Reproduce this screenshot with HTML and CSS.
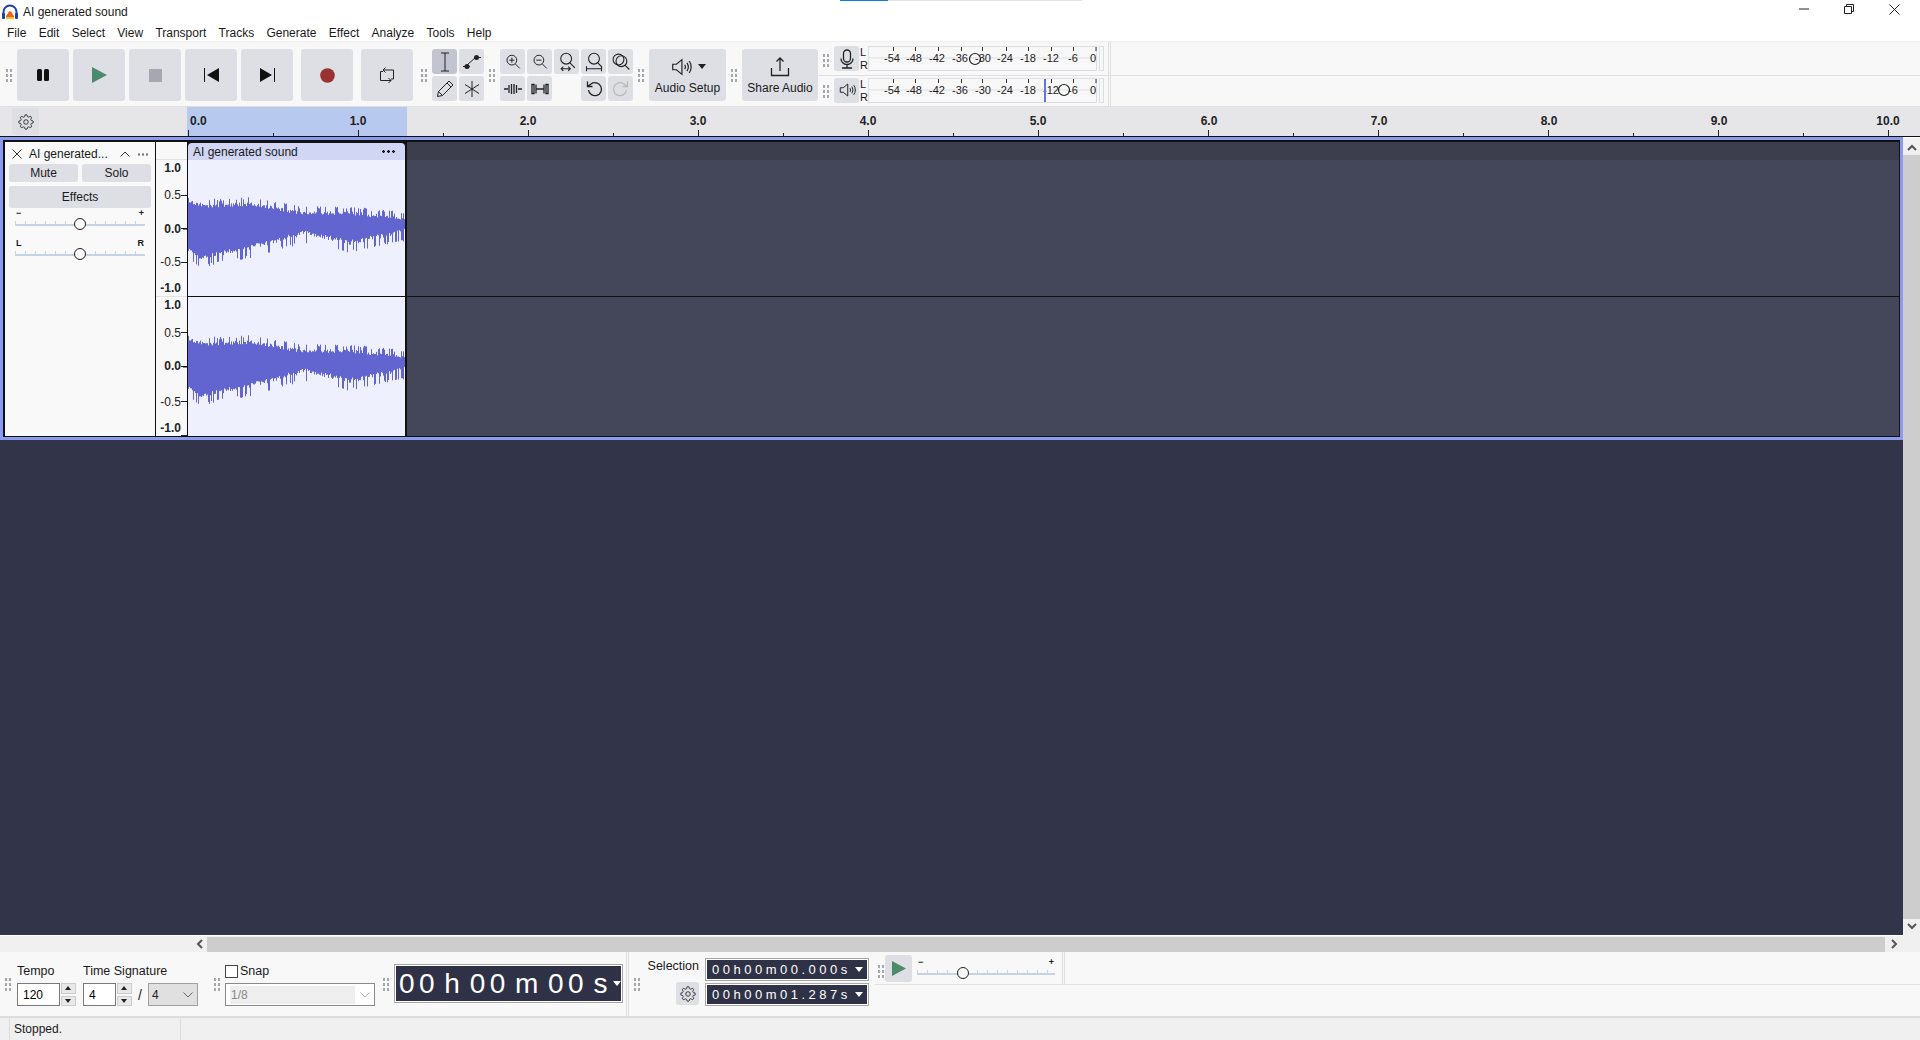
FILE: index.html
```html
<!DOCTYPE html>
<html lang="en">
<head>
  <meta charset="UTF-8"/>
  <title>AI generated sound</title>
  <link rel="stylesheet" href="styles.css">
</head>
<body>

<svg class="defs" width="0" height="0">
  <symbol id="gear" viewBox="0 0 24 24"><circle cx="12" cy="12" r="3.4"/><path d="M19.4 15a1.65 1.65 0 0 0 .33 1.82l.06.06a2 2 0 0 1 0 2.83 2 2 0 0 1-2.83 0l-.06-.06a1.65 1.65 0 0 0-1.82-.33 1.65 1.65 0 0 0-1 1.51V21a2 2 0 0 1-2 2 2 2 0 0 1-2-2v-.09A1.65 1.65 0 0 0 9 19.4a1.65 1.65 0 0 0-1.82.33l-.06.06a2 2 0 0 1-2.83 0 2 2 0 0 1 0-2.83l.06-.06a1.65 1.65 0 0 0 .33-1.82 1.65 1.65 0 0 0-1.51-1H3a2 2 0 0 1-2-2 2 2 0 0 1 2-2h.09A1.65 1.65 0 0 0 4.6 9a1.65 1.65 0 0 0-.33-1.82l-.06-.06a2 2 0 0 1 0-2.83 2 2 0 0 1 2.83 0l.06.06a1.65 1.65 0 0 0 1.82.33H9a1.65 1.65 0 0 0 1-1.51V3a2 2 0 0 1 2-2 2 2 0 0 1 2 2v.09a1.65 1.65 0 0 0 1 1.51 1.65 1.65 0 0 0 1.82-.33l.06-.06a2 2 0 0 1 2.83 0 2 2 0 0 1 0 2.83l-.06.06a1.65 1.65 0 0 0-.33 1.82V9a1.65 1.65 0 0 0 1.51 1H21a2 2 0 0 1 2 2 2 2 0 0 1-2 2h-.09a1.65 1.65 0 0 0-1.51 1z"/></symbol>
  <symbol id="speaker" viewBox="0 0 24 24"><path d="M3 9v6h4l6 5V4L7 9zM16 9.5q1.6 2.5 0 5M18.5 7.5q3 4.5 0 9M21 5.500q4.200 6.500 0 13"/></symbol>
  <symbol id="mag" viewBox="0 0 24 24"><circle cx="10.500" cy="9.500" r="6.500"/><path d="M15 14.500l6 6"/></symbol>
</svg>

<!-- title bar -->
<header class="titlebar">
  <svg class="logo" width="16" height="16" viewBox="0 0 16 16">
    <path d="M1.500 11V8a6.500 6.500 0 0 1 13 0v3" fill="none" stroke="#1c3fa8" stroke-width="2"/>
    <rect x="0" y="9" width="3" height="6" rx="1" fill="#1c3fa8"/>
    <rect x="13" y="9" width="3" height="6" rx="1" fill="#1c3fa8"/>
    <path d="M4 14v-2l1.500-2 1 -2 1.500-1 1.500 1 1 2 1.500 2v2z" fill="#e8651c"/>
    <path d="M4 15v-2h8v2z" fill="#f2c21a"/>
  </svg>
  <span class="title">AI generated sound</span>
  <div class="loadbar"><i></i></div>
  <div class="winbtns">
    <svg width="10" height="10" viewBox="0 0 10 10"><path d="M0 5h10" stroke="#222"/></svg>
    <svg width="10" height="10" viewBox="0 0 10 10"><path d="M.5 2.500h7v7h-7zM2.500 2.500v-2h7v7h-2" fill="none" stroke="#222"/></svg>
    <svg width="11" height="11" viewBox="0 0 11 11"><path d="M.5 .5l10 10M10.500 .5l-10 10" stroke="#222"/></svg>
  </div>
</header>

<nav class="menubar">
  <span>File</span><span>Edit</span><span>Select</span><span>View</span><span>Transport</span><span>Tracks</span><span>Generate</span><span>Effect</span><span>Analyze</span><span>Tools</span><span>Help</span>
</nav>

<!-- top toolbars -->
<section class="toolbar">
  <div class="grip"></div>
  <div class="transport">
    <button class="tbtn"><svg width="14" height="14" viewBox="0 0 14 14"><rect x="1" y="1" width="5" height="12" rx="1.500" fill="#111"/><rect x="8" y="1" width="5" height="12" rx="1.500" fill="#111"/></svg></button>
    <button class="tbtn"><svg width="16" height="16" viewBox="0 0 16 16"><path d="M1 0l15 8-15 8z" fill="#4c8a6c"/></svg></button>
    <button class="tbtn"><svg width="13" height="13" viewBox="0 0 13 13"><rect width="13" height="13" fill="#a6a8b1"/></svg></button>
    <button class="tbtn"><svg width="15" height="14" viewBox="0 0 15 14"><path d="M.5 0v14" stroke="#111"/><path d="M15 0v14L3 7z" fill="#111"/></svg></button>
    <button class="tbtn"><svg width="15" height="14" viewBox="0 0 15 14"><path d="M14.500 0v14" stroke="#111"/><path d="M0 0v14l12-7z" fill="#111"/></svg></button>
    <button class="tbtn gap"><svg width="15" height="15" viewBox="0 0 15 15"><circle cx="7.500" cy="7.500" r="7.300" fill="#9a3232"/></svg></button>
    <button class="tbtn gap"><svg width="16" height="18" viewBox="0 0 16 18" fill="none" stroke="#222"><path d="M4 4h10.500v9H12M12 14.500H1.500V5.500H4M6.500 1.500L4 4l2.500 2.500M9.500 12l2.500 2.500L9.500 17"/></svg></button>
  </div>
  <div class="grip wide"></div>
  <div class="tools">
    <button class="sbtn on"><svg width="16" height="20" viewBox="0 0 16 20" fill="none" stroke="#222"><path d="M4 1h8M4 19h8M8 1v18"/></svg></button>
    <button class="sbtn"><svg width="20" height="18" viewBox="0 0 20 18"><path d="M4 13L14 4" stroke="#222"/><path d="M1 13.500h7M12 4.500h7" stroke="#222"/><circle cx="5" cy="13.500" r="2.500" fill="#222"/><circle cx="14.500" cy="4.500" r="2.500" fill="#222"/></svg></button>
    <button class="sbtn"><svg width="18" height="18" viewBox="0 0 18 18" fill="none" stroke="#222"><path d="M1.500 16.500l1-5L13 1l4 4L6.500 15.500zM2.500 11.500l4 4M11 3l4 4"/></svg></button>
    <button class="sbtn"><svg width="16" height="16" viewBox="0 0 16 16" fill="none" stroke="#222"><path d="M8 0v16M1 3.500l14 9M15 3.500l-14 9"/></svg></button>
  </div>
  <div class="grip"></div>
  <div class="edit">
    <button class="sbtn"><svg class="ln" width="18" height="18" viewBox="0 0 24 24"><use href="#mag"/><path d="M7 9.500h7M10.500 6v7"/></svg></button>
    <button class="sbtn"><svg class="ln" width="18" height="18" viewBox="0 0 24 24"><use href="#mag"/><path d="M7 9.500h7"/></svg></button>
    <button class="sbtn"><svg class="ln" width="20" height="20" viewBox="0 0 24 24"><circle cx="11" cy="8" r="6.500"/><path d="M15.500 13l6 6M5 20h11M7.500 17.500L5 20l2.500 2.500M13.500 17.500L16 20l-2.500 2.500"/></svg></button>
    <button class="sbtn"><svg class="ln" width="20" height="20" viewBox="0 0 24 24"><circle cx="12" cy="8" r="6.500"/><path d="M16.500 13l5 5M3 20h18M3 17v6M21 17v6"/></svg></button>
    <button class="sbtn"><svg class="ln" width="20" height="20" viewBox="0 0 24 24"><circle cx="9" cy="9" r="6.500"/><circle cx="12.500" cy="11" r="6.500"/><path d="M17 16l5 5"/></svg></button>
    <button class="sbtn"><svg class="ln" width="18" height="12" viewBox="0 0 18 12"><path d="M0 6h4M14 6h4M5 2v8M7.500 1v10M10 1v10M12.500 2v8"/></svg></button>
    <button class="sbtn"><svg class="ln" width="18" height="12" viewBox="0 0 18 12"><path d="M1 1.500v9h2v-9zM5 1.500v9M13 1.500v9M15 1.500v9h2v-9zM5 6h8"/></svg></button>
    <span class="sgap"></span>
    <button class="sbtn"><svg class="ln" width="18" height="18" viewBox="0 0 18 18"><path d="M3.500 10a6.500 6.500 0 1 0 2.500-6L2.500 6.500M2.500 1.500v5h5"/></svg></button>
    <button class="sbtn off"><svg class="ln" width="18" height="18" viewBox="0 0 18 18"><path d="M14.500 10a6.500 6.500 0 1 1-2.500-6l3.500 2.500M15.500 1.500v5h-5"/></svg></button>
  </div>
  <div class="grip"></div>
  <button class="bigbtn setup">
    <span class="bigicon"><svg class="ln" width="22" height="22" viewBox="0 0 24 24"><use href="#speaker"/></svg><i class="caret"></i></span>
    <span>Audio Setup</span>
  </button>
  <div class="grip"></div>
  <button class="bigbtn share">
    <svg class="ln" width="20" height="22" viewBox="0 0 20 22"><path d="M1.500 12v7.500h17V12M10 15V2M6.500 5.500L10 2l3.500 3.500"/></svg>
    <span>Share Audio</span>
  </button>
  <div class="meters">
    <div class="meterrow first">
      <div class="grip"></div>
      <button class="sbtn"><svg class="ln" width="20" height="20" viewBox="0 0 20 20"><rect x="6.500" y="1" width="7" height="12" rx="3.500"/><path d="M4 9.500a6 6 0 0 0 12 0M10 15.500V19M5 19h10"/></svg></button>
      <div class="lr"><span>L</span><span>R</span></div>
      <svg class="meter" width="229" height="25" viewBox="0 0 229 25"><rect class="mbox" x=".5" y=".5" width="228" height="24"/><path class="mline" d="M1 12h227"/><path class="mtick" d="M25.500 1v4M47.500 1v4M70.500 1v4M93.500 1v4M114.500 1v4M138.500 1v4M160.500 1v4M183.500 1v4M205.500 1v4M228 1v4"/>
        <g class="mtext"><text x="24" y="16">-54</text><text x="46" y="16">-48</text><text x="69" y="16">-42</text><text x="92" y="16">-36</text><text x="115" y="16">-30</text><text x="137" y="16">-24</text><text x="160" y="16">-18</text><text x="183" y="16">-12</text><text x="205" y="16">-6</text><text x="225" y="16">0</text></g>
        <circle class="knob" cx="107" cy="13" r="5.500"/></svg>
      <div class="mend"></div>
      <div class="vlines"></div>
    </div>
    <div class="meterrow">
      <div class="grip"></div>
      <button class="sbtn"><svg class="ln" width="18" height="18" viewBox="0 0 24 24"><use href="#speaker"/></svg></button>
      <div class="lr"><span>L</span><span>R</span></div>
      <svg class="meter" width="229" height="25" viewBox="0 0 229 25"><rect class="mbox" x=".5" y=".5" width="228" height="24"/><path class="mline" d="M1 12h227"/><path class="mtick" d="M25.500 1v4M47.500 1v4M70.500 1v4M93.500 1v4M114.500 1v4M138.500 1v4M160.500 1v4M183.500 1v4M205.500 1v4M228 1v4"/>
        <g class="mtext"><text x="24" y="16">-54</text><text x="46" y="16">-48</text><text x="69" y="16">-42</text><text x="92" y="16">-36</text><text x="115" y="16">-30</text><text x="137" y="16">-24</text><text x="160" y="16">-18</text><text x="183" y="16">-12</text><text x="205" y="16">-6</text><text x="225" y="16">0</text></g>
        <rect x="176" y="1" width="2" height="23" fill="#6674e0"/>
        <circle class="knob" cx="196" cy="12" r="5.500"/></svg>
      <div class="mend"></div>
      <div class="vlines"></div>
    </div>
  </div>
</section>

<!-- time ruler -->
<section class="rulerbar">
  <div class="gearcell"><button class="gearbtn"><svg class="ln" width="16" height="16"><use href="#gear"/></svg></button></div>
  <svg class="ruler" width="1920" height="29" viewBox="0 0 1920 29">
    <rect x="187" y="0" width="220" height="29" fill="#b8c9f0"/>
    <path id="rulerTicks" stroke="#222" fill="none" d=""/>
    <g class="rtext">
      <text class="first" x="190" y="18">0.0</text><text x="358" y="18">1.0</text><text x="528" y="18">2.0</text><text x="698" y="18">3.0</text><text x="868" y="18">4.0</text><text x="1038" y="18">5.0</text><text x="1209" y="18">6.0</text><text x="1379" y="18">7.0</text><text x="1549" y="18">8.0</text><text x="1719" y="18">9.0</text><text x="1888" y="18">10.0</text>
    </g>
  </svg>
</section>

<!-- track area -->
<main class="workspace">
  <div class="trackview">
    <div class="trackframe">
      <div class="trackpanel">
        <div class="trackhead">
          <svg width="10" height="10" viewBox="0 0 10 10"><path d="M.5 .5l9 9M9.500 .5l-9 9" stroke="#333"/></svg>
          <span class="trackname">AI generated...</span>
          <svg class="fold" width="10" height="6" viewBox="0 0 10 6" fill="none"><path d="M.5 5.500L5 1l4.500 4.500" stroke="#333"/></svg>
          <span class="dots"></span>
        </div>
        <div class="btnrow"><button class="pbtn">Mute</button><button class="pbtn">Solo</button></div>
        <button class="pbtn effects">Effects</button>
        <div class="slider gain">
          <div class="sliderlabels"><b>−</b><b>+</b></div>
          <div class="track"><i></i></div>
        </div>
        <div class="slider pan">
          <div class="sliderlabels"><b>L</b><b>R</b></div>
          <div class="track"><i></i></div>
        </div>
      </div>
      <svg class="vruler" width="31" height="294" viewBox="0 0 31 294">
        <path d="M0 17.500h31" stroke="#e2e2e2"/><path d="M0 154.500h31" stroke="#e2e2e2"/>
        <path d="M25 53.500h6M25 86.500h6M25 120.500h6M25 190.500h6M25 224.500h6M25 259.500h6M25 293.500h6" stroke="#222"/>
        <path d="M27 86v1h4M27 224v1h4" stroke="#111"/>
        <g class="vtext">
          <text class="b" x="25" y="30">1.0</text><text x="25" y="57">0.5</text><text class="b" x="25" y="91">0.0</text><text x="25" y="124">-0.5</text><text class="b" x="25" y="150">-1.0</text>
          <text class="b" x="25" y="167">1.0</text><text x="25" y="195">0.5</text><text class="b" x="25" y="228">0.0</text><text x="25" y="264">-0.5</text><text class="b" x="25" y="290">-1.0</text>
        </g>
      </svg>
      <div class="trackbody">
        <div class="clip">
          <div class="cliphead"><span>AI generated sound</span><span class="dots dark"></span></div>
          <svg class="wave upper" width="217" height="136" viewBox="0 0 217 136"><path class="wavepath" transform="translate(0,68)" d=""/></svg>
          <svg class="wave lower" width="217" height="139" viewBox="0 0 217 139"><path class="wavepath" transform="translate(0,69)" d=""/></svg>
        </div>
        <div class="empty">
          <div class="emptyhead"></div>
          <div class="emptytop"></div>
          <div class="emptylow"></div>
        </div>
      </div>
    </div>
  </div>
  <div class="vscroll">
    <svg width="10" height="7" viewBox="0 0 10 7"><path d="M1 6l4-4 4 4" fill="none" stroke="#555" stroke-width="2"/></svg>
    <div class="vthumb"></div>
    <svg width="10" height="7" viewBox="0 0 10 7"><path d="M1 1l4 4 4-4" fill="none" stroke="#555" stroke-width="2"/></svg>
  </div>
</main>

<div class="hscroll">
  <svg width="7" height="10" viewBox="0 0 7 10"><path d="M6 1L2 5l4 4" fill="none" stroke="#555" stroke-width="2"/></svg>
  <div class="hthumb"></div>
  <svg width="7" height="10" viewBox="0 0 7 10"><path d="M1 1l4 4-4 4" fill="none" stroke="#555" stroke-width="2"/></svg>
</div>

<!-- bottom toolbars -->
<section class="bottombar">
  <div class="grip"></div>
  <div class="field tempo">
    <label>Tempo</label>
    <div class="spinrow">
      <input class="num w43" type="text" value="120" readonly/>
      <div class="spin"><i class="up"></i><i class="down"></i></div>
    </div>
  </div>
  <div class="field sig">
    <label>Time Signature</label>
    <div class="spinrow">
      <input class="num w33" type="text" value="4" readonly/>
      <div class="spin"><i class="up"></i><i class="down"></i></div>
      <span class="slash">/</span>
      <div class="drop active"><span>4</span><svg width="10" height="6" viewBox="0 0 10 6"><path d="M.5 .5L5 5l4.500-4.500" fill="none" stroke="#666"/></svg></div>
    </div>
  </div>
  <div class="grip"></div>
  <div class="field snap">
    <label class="check"><i></i>Snap</label>
    <div class="drop off"><span>1/8</span><svg width="10" height="6" viewBox="0 0 10 6"><path d="M.5 .5L5 5l4.500-4.500" fill="none" stroke="#aaa"/></svg></div>
  </div>
  <div class="grip"></div>
  <div class="bigtime"><span>00 h 00 m 00 s</span><i class="caret white"></i></div>
  <div class="vlines"></div>
  <div class="grip"></div>
  <div class="selection">
    <div class="selleft">
      <span>Selection</span>
      <button class="sbtn gearsmall"><svg class="ln" width="16" height="16"><use href="#gear"/></svg></button>
    </div>
    <div class="selright">
      <div class="smalltime"><span>00h00m00.000s</span><i class="caret white"></i></div>
      <div class="smalltime"><span>00h00m01.287s</span><i class="caret white"></i></div>
    </div>
  </div>
  <div class="playrate">
    <div class="playtop">
      <div class="grip"></div>
      <button class="playbtn"><svg width="14" height="15" viewBox="0 0 14 15"><path d="M0 0l14 7.500L0 15z" fill="#4c8a6c"/></svg></button>
      <div class="slider speed">
        <div class="sliderlabels"><b>−</b><b>+</b></div>
        <div class="track"><i></i></div>
      </div>
      <div class="vline1"></div>
    </div>
  </div>
</section>

<footer class="statusbar"><span>Stopped.</span></footer>

<script src="waveform.js"></script>
</body>
</html>
```

FILE: styles.css
```css
* {
  box-sizing: border-box;
}
html, body {
  margin: 0;
  height: 100%;
  overflow: hidden;
}
body {
  width: 1920px;
  height: 1040px;
  display: flex;
  flex-direction: column;
  font-family: "Liberation Sans", Arial, sans-serif;
  font-size: 12px;
  color: #1a1a1a;
  background: #f8f8f8;
}
button {
  border: 0;
  padding: 0;
  margin: 0;
  font: inherit;
  color: inherit;
}
.defs {
  display: block;
  height: 0;
}
.defs symbol {
  overflow: visible;
}
.ln, .ln use {
  fill: none;
  stroke: #222;
  stroke-width: 1.3;
}
.off .ln {
  stroke: #bbb;
}

/* title + menu */
.titlebar {
  height: 22px;
  flex: none;
  display: flex;
  align-items: center;
  background: #fff;
  position: relative;
  padding: 2px 0 0 2px;
}
.title {
  margin-left: 5px;
}
.loadbar {
  position: absolute;
  top: 0;
  left: 840px;
  width: 242px;
  height: 1px;
  background: #e4e4e4;
}
.loadbar i {
  display: block;
  width: 48px;
  height: 1px;
  background: #0a7ee0;
}
.winbtns {
  margin-left: auto;
  width: 121px;
  display: flex;
  justify-content: space-between;
  align-items: center;
  padding-right: 20px;
  margin-top: -6px;
}
.menubar {
  height: 19px;
  flex: none;
  display: flex;
  align-items: center;
  gap: 12.3px;
  padding: 3px 0 0 7px;
  background: #fff;
}

/* top toolbar */
.toolbar {
  height: 66px;
  flex: none;
  display: flex;
  align-items: center;
  background: #f8f8f8;
  border-top: 1px solid #eee;
  border-bottom: 1px solid #e0e0e0;
  padding: 2px 0 0 1px;
}
.grip {
  width: 7px;
  height: 14px;
  margin: 0 5px 0 4px;
  flex: none;
  background: radial-gradient(circle, #a5a7b0 1.3px, transparent 1.5px) 0 0 / 4px 5px;
}
.grip.wide {
  margin-left: 7px;
}
.transport {
  display: flex;
  gap: 4px;
}
.tbtn {
  width: 52px;
  height: 52px;
  border-radius: 3px;
  background: #dedfe4;
  display: flex;
  align-items: center;
  justify-content: center;
}
.tbtn.gap {
  margin-left: 4px;
}
.tools, .edit {
  display: grid;
  grid-template-rows: 25px 25px;
  grid-template-columns: 25px 25px;
  gap: 2px;
}
.edit {
  grid-template-columns: repeat(5, 25px);
}
.sgap {
  visibility: hidden;
}
.sbtn {
  width: 25px;
  height: 25px;
  border-radius: 3px;
  background: #dedfe4;
  display: flex;
  align-items: center;
  justify-content: center;
  flex: none;
}
.sbtn.on {
  background: #c2c5d0;
}
.bigbtn {
  height: 52px;
  border-radius: 3px;
  background: #dedfe4;
  display: flex;
  flex-direction: column;
  align-items: center;
  justify-content: center;
  flex: none;
  gap: 3px;
}
.setup {
  width: 77px;
}
.share {
  width: 76px;
}
.bigicon {
  display: flex;
  align-items: center;
  gap: 6px;
  height: 22px;
}
.caret {
  display: inline-block;
  width: 0;
  height: 0;
  border: 4px solid transparent;
  border-top: 5px solid #222;
  border-bottom: 0;
}
.caret.white {
  border-top-color: #fff;
}
.meters {
  flex: 1;
  align-self: stretch;
  display: flex;
  flex-direction: column;
  margin-top: -2px;
}
.meterrow {
  height: 31px;
  display: flex;
  align-items: flex-start;
  padding-top: 2px;
}
.meterrow .grip {
  align-self: center;
  margin-top: -2px;
}
.meterrow.first {
  height: 34px;
  padding-top: 4px;
  border-bottom: 1px solid #e0e0e0;
}
.meterrow.first .grip {
  margin-top: 0;
}
.lr {
  width: 8px;
  margin-left: 1px;
  height: 25px;
  display: flex;
  flex-direction: column;
  justify-content: space-between;
  font-size: 11px;
  line-height: 12px;
}
.meter {
  flex: none;
}
.mbox {
  fill: #f8f8f8;
  stroke: #dcdde2;
}
.mline {
  stroke: #dcdde2;
}
.mtick {
  stroke: #333;
}
.mtext text {
  font-size: 11px;
  text-anchor: middle;
  fill: #222;
}
.knob {
  fill: none;
  stroke: #222;
  stroke-width: 1.2;
}
.mend {
  width: 5px;
  height: 25px;
  margin-left: 2px;
  border: 1px solid #dcdde2;
  flex: none;
}
.vlines {
  width: 3px;
  align-self: stretch;
  margin: -4px 0 -2px 4px;
  border-left: 1px solid #dedede;
  border-right: 1px solid #dedede;
  flex: none;
}

/* ruler */
.rulerbar {
  height: 30px;
  flex: none;
  position: relative;
  background: #e6e6e9;
  border-bottom: 1px solid #111;
}
.ruler {
  display: block;
}
.gearcell {
  position: absolute;
  left: 12px;
  top: 1px;
  z-index: 1;
}
.gearbtn {
  width: 27px;
  height: 27px;
  border-radius: 3px;
  background: #dedfe4;
  display: flex;
  align-items: center;
  justify-content: center;
}
.rtext text {
  font-size: 12px;
  font-weight: bold;
  text-anchor: middle;
  fill: #222;
}
.rtext .first {
  text-anchor: start;
}

/* tracks */
.workspace {
  flex: none;
  height: 799px;
  display: flex;
}
.trackview {
  flex: 1;
  background: #32354a;
  border-bottom: 1px solid #fff;
}
.trackframe {
  height: 303px;
  display: flex;
  border: 3px solid #8a9bf0;
  padding: 2px 1px 0 2px;
  background: #111;
}
.trackpanel {
  width: 150px;
  height: 294px;
  flex: none;
  background: #f9f9f9;
  padding: 0 4px;
}
.trackhead {
  height: 22px;
  display: flex;
  align-items: center;
  padding: 2px 0 0 3px;
}
.trackname {
  width: 84px;
  margin-left: 7px;
  white-space: nowrap;
}
.fold {
  margin-left: 7px;
}
.dots {
  width: 12px;
  height: 3px;
  margin-left: 7px;
  flex: none;
  background: radial-gradient(circle, #777 1px, transparent 1.300px) 0 0 / 4px 3px;
}
.dots.dark {
  width: 15px;
  background: radial-gradient(circle, #111 1.200px, transparent 1.500px) 0 0 / 5px 3px;
  margin: 0;
}
.btnrow {
  display: flex;
  gap: 4px;
}
.pbtn {
  flex: 1;
  height: 18px;
  border-radius: 3px;
  background: #dedfe4;
  text-align: center;
}
.effects {
  display: block;
  width: 100%;
  height: 22px;
  margin-top: 4px;
}
.slider {
  position: relative;
  font-size: 9px;
}
.gain, .pan {
  margin: 0 6px;
}
.pan {
  margin-top: 12px;
}
.sliderlabels {
  display: flex;
  justify-content: space-between;
  height: 11px;
  padding: 0 1px;
  line-height: 11px;
}
.track {
  position: relative;
  height: 7px;
  border-bottom: 2px solid #c5d3e2;
  background: repeating-linear-gradient(90deg, #c5d3e2 0 1px, transparent 1px 10px) 0 2px / 100% 3px no-repeat;
}
.track i {
  position: absolute;
  left: 50%;
  top: -1px;
  width: 12px;
  height: 12px;
  margin-left: -6px;
  border: 1.200px solid #222;
  border-radius: 50%;
  background: #f9f9f9;
}
.vruler {
  flex: none;
  background: #f8f8f8;
  margin-left: 1px;
}
.vtext text {
  font-size: 12px;
  text-anchor: end;
  fill: #222;
}
.vtext .b {
  font-weight: bold;
}
.trackbody {
  flex: 1;
  display: flex;
  margin-left: 1px;
  background: #111;
  min-width: 0;
}
.clip {
  width: 217px;
  height: 294px;
  flex: none;
  position: relative;
  background: #111;
  margin-right: 2px;
}
.cliphead {
  position: absolute;
  left: 0;
  right: 0;
  top: 1px;
  height: 17px;
  padding: 0 9px 0 5px;
  display: flex;
  align-items: center;
  justify-content: space-between;
  background: #d0d6f3;
  border-radius: 4px 4px 0 0;
  font-size: 12px;
}
.wave {
  display: block;
  background: #eef1fd;
}
.wave.upper {
  margin-top: 18px;
}
.wave.lower {
  margin-top: 1px;
}
.wavepath {
  stroke: #6264d0;
  stroke-width: 1;
  fill: none;
}
.empty {
  flex: 1;
  display: flex;
  flex-direction: column;
}
.emptyhead {
  height: 18px;
  background: #3c3e4e;
}
.emptytop {
  height: 136px;
  background: #444759;
}
.emptylow {
  height: 139px;
  margin-top: 1px;
  background: #444759;
}
.vscroll {
  width: 17px;
  flex: none;
  background: #f0f0f0;
  display: flex;
  flex-direction: column;
  align-items: center;
  border-top: 1px solid #fff;
  padding-top: 6px;
  padding-bottom: 6px;
  justify-content: space-between;
}
.vthumb {
  flex: 1;
  width: 100%;
  margin: 4px 0;
  background: #cdcdcd;
}
.hscroll {
  height: 16px;
  flex: none;
  display: flex;
  align-items: center;
  background: #f0f0f0;
  padding-left: 196px;
}
.hthumb {
  width: 1678px;
  height: 15px;
  margin: 0 6px 0 4px;
  background: #cdcdcd;
}

/* bottom toolbars */
.bottombar {
  height: 66px;
  flex: none;
  display: flex;
  align-items: flex-start;
  background: #f8f8f8;
  border-bottom: 2px solid #dcdcdc;
}
.bottombar > .grip {
  margin: 25px 5px 0;
}
.bottombar > .grip:first-child {
  margin-left: 4px;
  margin-right: 6px;
}
.bottombar > .vlines {
  height: 64px;
  margin: 0 0 0 3px;
}
.bottombar > .vlines + .grip {
  margin-left: 4px;
}
.field {
  margin-top: 12px;
  flex: none;
}
.field label {
  display: block;
  height: 14px;
  line-height: 14px;
  margin-bottom: 5px;
  font-size: 12.500px;
}
.tempo {
  width: 60px;
  margin-right: 6px;
}
.sig {
  width: 115px;
  margin-right: 10px;
}
.snap {
  width: 150px;
  margin-right: 2px;
}
.spinrow {
  display: flex;
  align-items: center;
}
.num {
  height: 23px;
  border: 1px solid #7a7a7a;
  background: #fff;
  font: inherit;
  padding: 0 0 0 5px;
  outline: 0;
}
.w43 {
  width: 43px;
}
.w33 {
  width: 33px;
}
.spin {
  width: 15px;
  height: 23px;
  margin-left: 1px;
  display: flex;
  flex-direction: column;
  gap: 2px;
  flex: none;
}
.spin i {
  flex: 1;
  background: #e8e8e8;
  border: 1px solid #ccc;
  position: relative;
}
.spin i::after {
  content: "";
  position: absolute;
  left: 3px;
  top: 2px;
  border: 3.500px solid transparent;
}
.spin .up::after {
  border-bottom: 4px solid #222;
  border-top: 0;
}
.spin .down::after {
  border-top: 4px solid #222;
  border-bottom: 0;
}
.slash {
  width: 16px;
  text-align: center;
  font-size: 14px;
}
.drop {
  height: 23px;
  display: flex;
  align-items: center;
  justify-content: space-between;
  border: 1px solid #a0a0a0;
  flex: 1;
  padding-left: 3px;
  padding-right: 4px;
}
.drop.active {
  background: #e0e0e0;
  color: #222;
  font-size: 12px;
}
.drop.off {
  width: 150px;
  background: #fff;
  color: #888;
  border-color: #8a8a8a;
}
.drop.off span {
  width: 125px;
  height: 18px;
  line-height: 18px;
  margin-left: 1px;
  padding-left: 1px;
  background: #efefef;
}
.field .check {
  display: flex;
  align-items: center;
  gap: 2px;
}
.check i {
  width: 13px;
  height: 13px;
  background: #fff;
  border: 1px solid #444;
  display: block;
}
.bigtime {
  width: 229px;
  height: 39px;
  margin-top: 12px;
  display: flex;
  align-items: center;
  background: #2f3246;
  color: #fff;
  border: 1px solid #a6a6a6;
  box-shadow: inset 0 0 0 1px #fff;
  padding-left: 4px;
  font-size: 28px;
  letter-spacing: 4.400px;
  word-spacing: -6.800px;
  white-space: nowrap;
  flex: none;
  overflow: hidden;
}
.bigtime .caret {
  margin-left: 1px;
}
.selection {
  display: flex;
  margin-top: 6px;
  margin-left: 3px;
  flex: none;
}
.selleft {
  width: 57px;
  height: 47px;
  display: flex;
  flex-direction: column;
  align-items: flex-end;
  justify-content: space-between;
  padding-right: 6px;
  padding-top: 1px;
  font-size: 12.500px;
  white-space: nowrap;
}
.gearsmall {
  width: 23px;
  height: 23px;
}
.selright {
  width: 164px;
  display: flex;
  flex-direction: column;
  gap: 2px;
}
.smalltime {
  height: 23px;
  display: flex;
  align-items: center;
  justify-content: space-between;
  background: #2f3246;
  color: #fff;
  border: 1px solid #a6a6a6;
  box-shadow: inset 0 0 0 1px #fff;
  padding: 0 5px 0 6px;
  font-size: 13px;
  letter-spacing: 3.500px;
  white-space: nowrap;
}
.playrate {
  flex: 1;
  margin-left: 6px;
  height: 33px;
  border-bottom: 1px solid #e0e0e0;
}
.playtop {
  height: 32px;
  display: flex;
  align-items: flex-start;
  padding-top: 3px;
}
.playtop .grip {
  margin: 9px 1px 0 2px;
}
.playbtn {
  width: 27px;
  height: 27px;
  border-radius: 3px;
  background: #dedfe4;
  display: flex;
  align-items: center;
  justify-content: center;
}
.speed {
  width: 138px;
  margin: 2px 0 0 5px;
}
.vline1 {
  width: 3px;
  height: 32px;
  margin-left: 7px;
  border-left: 1px solid #dedede;
  border-right: 1px solid #dedede;
  margin-top: -3px;
}
.speed .track i {
  left: 33%;
}
.statusbar {
  flex: 1;
  display: flex;
  align-items: center;
  background: #f0f0f0;
  padding-left: 9px;
}
.statusbar span {
  width: 172px;
  height: 22px;
  line-height: 22px;
  padding-left: 4px;
  border-left: 1px solid #dcdcdc;
  border-right: 1px solid #dcdcdc;
}
```

FILE: waveform.js
```js
// ruler ticks
let ticks = '';
for (let i = 0; i <= 20; i++) {
  const x = Math.round(187.5 + i * 85) + 0.5;
  ticks += `M${x} ${i % 2 ? 26 : 23}V29`;
}
document.getElementById('rulerTicks').setAttribute('d', ticks);

// envelope points: [x, amplitude]
const topEnv = [[0, 33], [20, 29], [62, 31], [112, 22], [162, 22], [217, 16]];
const botEnv = [[0, 32], [12, 40], [62, 30], [117, 15], [162, 25], [217, 13]];

function lerp(env, x) {
  for (let i = 1; i < env.length; i++) {
    if (x <= env[i][0]) {
      const t = (x - env[i - 1][0]) / (env[i][0] - env[i - 1][0]);
      return env[i - 1][1] + t * (env[i][1] - env[i - 1][1]);
    }
  }
  return env[env.length - 1][1];
}

let seed = 7;
function rnd() {
  seed = (seed * 16807) % 2147483647;
  return seed / 2147483647;
}

let d = '';
for (let x = 0; x < 217; x++) {
  const up = lerp(topEnv, x) - (rnd() < 0.3 ? rnd() * 3 : 5 + rnd() * 4);
  const down = lerp(botEnv, x) - (rnd() < 0.2 ? rnd() * 3 : 8 + rnd() * 5);
  d += `M${x + 0.5} ${(-up).toFixed(1)}V${down.toFixed(1)}`;
}
document.querySelectorAll('.wavepath').forEach(p => p.setAttribute('d', d));
```
